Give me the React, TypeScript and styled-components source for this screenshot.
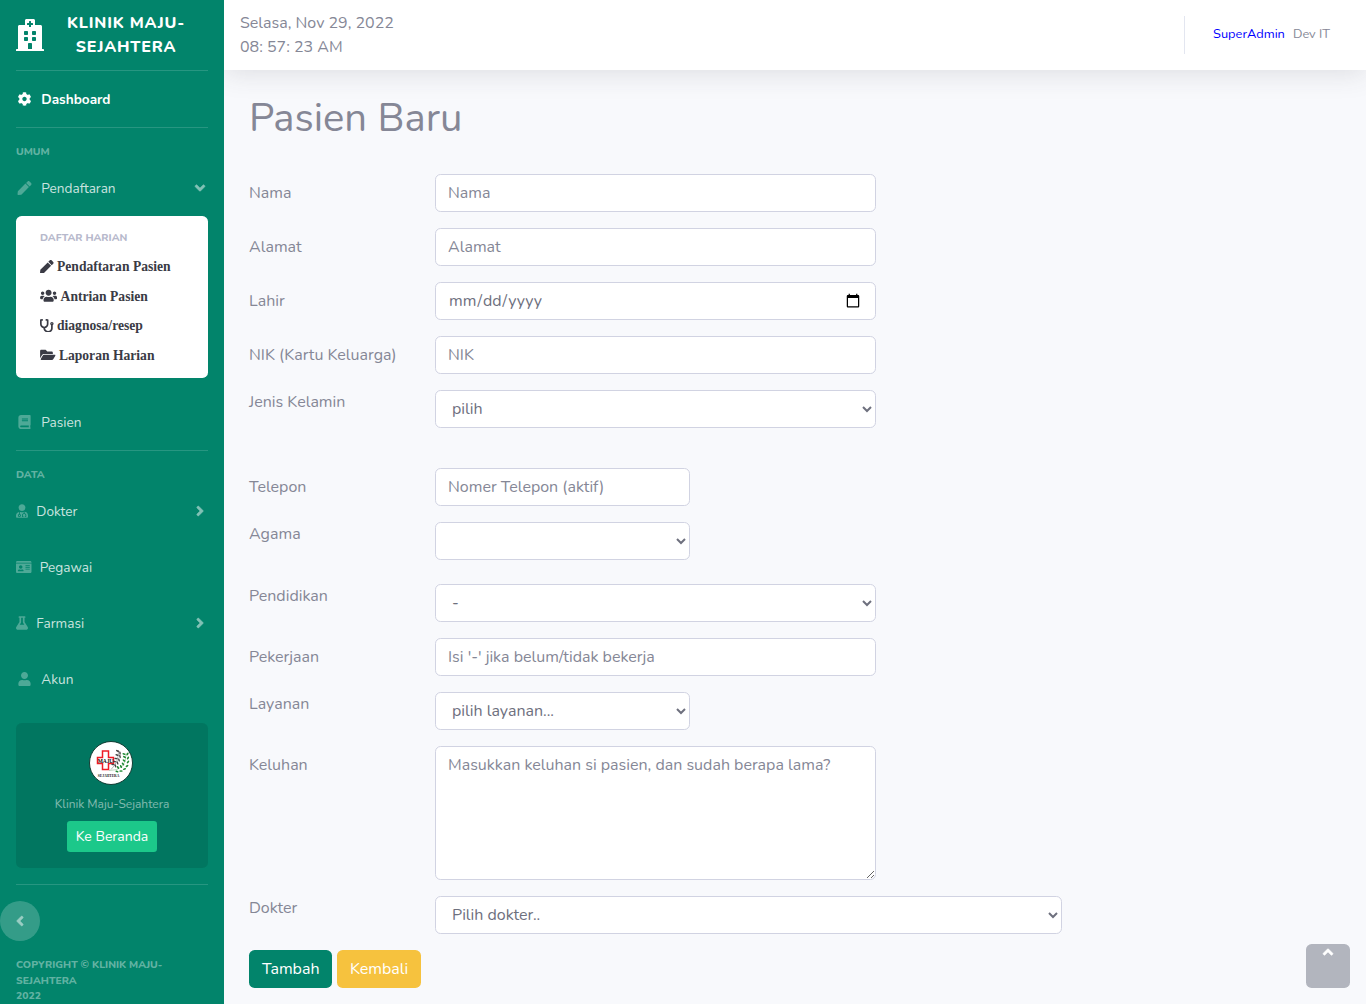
import React from "react";
import styled, { createGlobalStyle } from "styled-components";
import {
  FaAngleDown,
  FaAngleLeft,
  FaAngleRight,
  FaAngleUp,
  FaBook,
  FaCog,
  FaFlask,
  FaFolderOpen,
  FaHospital,
  FaIdCard,
  FaPen,
  FaStethoscope,
  FaUser,
  FaUserMd,
  FaUsers,
} from "react-icons/fa";

const green = "#02846b";
const fontStack = 'Nunito, Lato, "Open Sans", sans-serif';

const GlobalStyle = createGlobalStyle`
  *, *::before, *::after { box-sizing: border-box; }
  body {
    margin: 0;
    overflow: hidden;
    background: #f8f9fc;
    color: #858796;
    font: 400 16px/1.5 ${fontStack};
  }
  input, select, textarea, button { font-family: inherit; margin: 0; }
`;

const Page = styled.div`
  display: flex;
  height: 100vh;
  overflow: hidden;
`;

/* ---------- Sidebar ---------- */

const Sidebar = styled.aside`
  flex: 0 0 224px;
  display: flex;
  flex-direction: column;
  background: ${green};
  overflow: hidden;
  & > * { flex-shrink: 0; }
`;

const Brand = styled.div`
  display: flex;
  align-items: center;
  height: 70px;
  padding: 0 16px;
  color: #fff;
  font-size: 16px;
  font-weight: 800;
  letter-spacing: 0.8px;
  line-height: 24px;
  text-align: center;
  text-transform: uppercase;
  svg { font-size: 32px; width: 28px; }
`;

const BrandText = styled.div`
  flex: 1;
  padding: 0 16px;
  white-space: nowrap;
`;

const Divider = styled.hr`
  width: 192px;
  margin: 0 16px;
  border: 0;
  border-top: 1px solid rgba(255, 255, 255, 0.15);
`;

const GroupHeading = styled.div`
  height: 32px;
  padding: 16px 16px 0;
  color: rgba(255, 255, 255, 0.4);
  font-size: 10.4px;
  font-weight: 800;
  line-height: 15.6px;
  text-transform: uppercase;
`;

const NavLink = styled.a<{ $active?: boolean; $iconWidth?: number }>`
  display: flex;
  align-items: center;
  height: 56px;
  padding: 0 16px;
  color: ${(p) => (p.$active ? "#fff" : "rgba(255, 255, 255, 0.8)")};
  font-size: 13.6px;
  font-weight: ${(p) => (p.$active ? 700 : 400)};
  line-height: 20px;
  & > svg:first-child {
    width: ${(p) => p.$iconWidth ?? 17}px;
    height: 14px;
    margin-right: 8px;
    color: ${(p) => (p.$active ? "#fff" : "rgba(255, 255, 255, 0.3)")};
  }
`;

const NavText = styled.span`
  padding: 2px 0 0 0.3px;
`;

const Caret = styled.span`
  display: flex;
  margin-left: auto;
  color: #fff;
  opacity: 0.5;
  font-size: 16px;
  svg { stroke-width: 16px; }
`;

const SubMenu = styled.div`
  height: 162px;
  margin: 0 16px 16px;
  padding: 8px 0;
  border-radius: 5.6px;
  background: #fff;
`;

const SubHeading = styled.h6`
  margin: 0;
  padding: 6px 24px 6.45px;
  color: #b7b9cc;
  font-size: 10.4px;
  font-weight: 800;
  line-height: 16px;
  text-transform: uppercase;
`;

const SubLink = styled.a<{ $iconWidth?: number }>`
  display: flex;
  align-items: center;
  gap: 3.4px;
  height: 29.5px;
  padding: 0 24px;
  color: #3a3b45;
  font: 700 13.6px/20px "Liberation Serif", "Times New Roman", serif;
  white-space: nowrap;
  svg {
    width: ${(p) => p.$iconWidth ?? 13.6}px;
    height: 13.6px;
    margin-bottom: 1px;
  }
`;

const PromoCard = styled.div`
  display: flex;
  flex-direction: column;
  align-items: center;
  height: 145px;
  margin: 16px 16px;
  padding-top: 17.5px;
  border-radius: 5.6px;
  background: rgba(0, 0, 0, 0.1);
  svg { margin-right: 2px; }
`;

const PromoText = styled.p`
  margin: 10.5px 0 8px;
  color: rgba(255, 255, 255, 0.5);
  font-size: 12px;
  line-height: 18px;
`;

const PromoButton = styled.button`
  height: 31px;
  padding: 0 9px;
  border: 0;
  border-radius: 3.2px;
  background: #1cc88a;
  color: #fff;
  font-size: 14px;
`;

const Toggle = styled.button`
  display: flex;
  align-items: center;
  justify-content: center;
  width: 40px;
  height: 40px;
  margin-top: 16px;
  padding: 0;
  border: 0;
  border-radius: 50%;
  background: rgba(255, 255, 255, 0.2);
  color: #fff;
  font-size: 16px;
  svg { opacity: 0.5; stroke-width: 16px; }
`;

const Copyright = styled.div`
  padding: 16px 16px 0;
  color: rgba(255, 255, 255, 0.4);
  font-size: 10.4px;
  font-weight: 800;
  line-height: 15.6px;
  text-transform: uppercase;
`;

/* ---------- Main ---------- */

const Main = styled.main`
  flex: 1;
  display: flex;
  flex-direction: column;
  min-width: 0;
  overflow: hidden;
`;

const Topbar = styled.header`
  display: flex;
  flex: 0 0 70px;
  align-items: center;
  justify-content: space-between;
  padding: 0 36px 0 16px;
  background: #fff;
  box-shadow: 0 2.4px 28px 0 rgba(58, 59, 69, 0.15);
`;

const Clock = styled.div`
  line-height: 24px;
  white-space: pre;
`;

const UserArea = styled.div`
  display: flex;
  align-items: center;
  gap: 8px;
  height: 38px;
  padding: 0 0 2px 28px;
  border-left: 1px solid #e3e6f0;
  font-size: 12.8px;
  line-height: 19px;
`;

const RoleName = styled.span`
  color: blue;
`;

const Content = styled.form`
  padding: 24px 25px 0;
`;

const Title = styled.h1`
  margin: 0 0 32px;
  font-size: 40px;
  font-weight: 400;
  line-height: 48px;
`;

const Field = styled.div<{ $gap?: number; $select?: boolean }>`
  display: grid;
  grid-template-columns: 186px auto;
  justify-content: start;
  align-items: start;
  margin-bottom: ${(p) => p.$gap ?? 16}px;
  & > label { padding-top: ${(p) => (p.$select ? 0 : 7)}px; line-height: 24px; }
`;

const controlBase = `
  display: block;
  height: 38px;
  padding: 6px 12px;
  border: 1px solid #d1d3e2;
  border-radius: 5.6px;
  background-color: #fff;
  color: #6e707e;
  font-size: 16px;
  font-weight: 400;
  line-height: 24px;
  &::placeholder { color: #858796; opacity: 1; }
`;

const Input = styled.input<{ $w?: number }>`
  ${controlBase}
  width: ${(p) => p.$w ?? 441}px;
`;

const Select = styled.select<{ $w?: number }>`
  ${controlBase}
  width: ${(p) => p.$w ?? 441}px;
`;

const TextArea = styled.textarea`
  ${controlBase}
  width: 441px;
  height: 134px;
  resize: vertical;
`;

const Actions = styled.div`
  display: flex;
  gap: 4.5px;
`;

const Button = styled.button<{ $color: string }>`
  height: 38px;
  padding: 0 13px;
  border: 0;
  border-radius: 5.6px;
  background: ${(p) => p.$color};
  color: #fff;
  font-size: 16px;
  line-height: 24px;
`;

const ScrollTop = styled.a`
  position: fixed;
  right: 16px;
  bottom: 16px;
  display: flex;
  justify-content: center;
  width: 44px;
  height: 44px;
  border-radius: 5.6px;
  background: #b2b5be;
  color: #fff;
  font-size: 16px;
  svg { stroke-width: 16px; }
`;

const darkLeaves = [
  [53, 50, 70], [48, 47, 10], [57, 44, 70], [51, 41, 10], [60, 38, 70],
  [54, 35, 10], [62, 31, 75], [56, 28, 15], [62, 24, 80], [57, 20, 30],
];
const greenLeaves = [
  [56, 61, 20], [58, 53, 60], [64, 60, 0], [64, 51, 60], [71, 56, -20], [68, 46, 50],
  [76, 50, -40], [70, 39, 40], [78, 42, -50], [71, 32, 30], [78, 34, -60], [70, 26, 20], [77, 26, -60],
];

function ClinicLogo() {
  return (
    <svg width="44" height="44" viewBox="0 0 88 88" aria-hidden="true">
      <circle cx="44" cy="44" r="43" fill="#fff" stroke="#123c33" strokeWidth="2" />
      <path
        d="M27 20h12v13h10v12H39v12H27V45H17V33h10z"
        fill="#fff"
        stroke="#ee1c25"
        strokeWidth="3"
      />
      <text x="33" y="43" textAnchor="middle" fontFamily="Liberation Serif, serif" fontWeight="700" fontSize="11" textLength="31" fill="#111">
        MAJU
      </text>
      <path d="M44 57 Q60 42 59 18" fill="none" stroke="#666" strokeWidth="1" />
      {darkLeaves.map(([x, y, r], i) => (
        <ellipse key={i} cx={x} cy={y} rx="3.4" ry="1.5" fill="#444" transform={`rotate(${r} ${x} ${y})`} />
      ))}
      <path d="M40 59 Q76 60 74 24" fill="none" stroke="#7cae7c" strokeWidth="1" />
      {greenLeaves.map(([x, y, r], i) => (
        <ellipse key={i} cx={x} cy={y} rx="3.4" ry="1.7" fill="#1f8a33" transform={`rotate(${r} ${x} ${y})`} />
      ))}
      <text x="39" y="72" textAnchor="middle" fontFamily="Liberation Serif, serif" fontWeight="700" fontSize="9.5" textLength="43" lengthAdjust="spacingAndGlyphs" fill="#222">
        SEJAHTERA
      </text>
    </svg>
  );
}

export default function App() {
  return (
    <Page>
      <GlobalStyle />
      <Sidebar>
        <Brand>
          <FaHospital />
          <BrandText>
            Klinik Maju-
            <br />
            Sejahtera
          </BrandText>
        </Brand>
        <Divider />
        <NavLink $active>
          <FaCog />
          <NavText>Dashboard</NavText>
        </NavLink>
        <Divider />
        <GroupHeading>Umum</GroupHeading>
        <NavLink>
          <FaPen />
          <NavText>Pendaftaran</NavText>
          <Caret>
            <FaAngleDown />
          </Caret>
        </NavLink>
        <SubMenu>
          <SubHeading>Daftar Harian</SubHeading>
          <SubLink>
            <FaPen />
            Pendaftaran Pasien
          </SubLink>
          <SubLink $iconWidth={17.2}>
            <FaUsers />
            Antrian Pasien
          </SubLink>
          <SubLink>
            <FaStethoscope />
            diagnosa/resep
          </SubLink>
          <SubLink $iconWidth={15.5}>
            <FaFolderOpen />
            Laporan Harian
          </SubLink>
        </SubMenu>
        <NavLink>
          <FaBook />
          <NavText>Pasien</NavText>
        </NavLink>
        <Divider />
        <GroupHeading>Data</GroupHeading>
        <NavLink $iconWidth={12}>
          <FaUserMd />
          <NavText>Dokter</NavText>
          <Caret>
            <FaAngleRight />
          </Caret>
        </NavLink>
        <NavLink $iconWidth={15.5}>
          <FaIdCard />
          <NavText>Pegawai</NavText>
        </NavLink>
        <NavLink $iconWidth={12}>
          <FaFlask />
          <NavText>Farmasi</NavText>
          <Caret>
            <FaAngleRight />
          </Caret>
        </NavLink>
        <NavLink>
          <FaUser />
          <NavText>Akun</NavText>
        </NavLink>
        <PromoCard>
          <ClinicLogo />
          <PromoText>Klinik Maju-Sejahtera</PromoText>
          <PromoButton type="button">Ke Beranda</PromoButton>
        </PromoCard>
        <Divider />
        <Toggle type="button" aria-label="Toggle sidebar">
          <FaAngleLeft />
        </Toggle>
        <Copyright>
          Copyright © Klinik Maju-Sejahtera
          <br />
          2022
        </Copyright>
      </Sidebar>

      <Main>
        <Topbar>
          <Clock>{"Selasa, Nov 29, 2022\n08: 57: 23 AM"}</Clock>
          <UserArea>
            <RoleName>SuperAdmin</RoleName>
            <span>Dev IT</span>
          </UserArea>
        </Topbar>
        <Content>
          <Title>Pasien Baru</Title>
          <Field>
            <label>Nama</label>
            <Input placeholder="Nama" />
          </Field>
          <Field>
            <label>Alamat</label>
            <Input placeholder="Alamat" />
          </Field>
          <Field>
            <label>Lahir</label>
            <Input type="date" />
          </Field>
          <Field>
            <label>NIK (Kartu Keluarga)</label>
            <Input placeholder="NIK" />
          </Field>
          <Field $select $gap={40}>
            <label>Jenis Kelamin</label>
            <Select>
              <option>pilih</option>
            </Select>
          </Field>
          <Field>
            <label>Telepon</label>
            <Input $w={255} placeholder="Nomer Telepon (aktif)" />
          </Field>
          <Field $select $gap={24}>
            <label>Agama</label>
            <Select $w={255}>
              <option></option>
            </Select>
          </Field>
          <Field $select>
            <label>Pendidikan</label>
            <Select>
              <option>-</option>
            </Select>
          </Field>
          <Field>
            <label>Pekerjaan</label>
            <Input placeholder="Isi '-' jika belum/tidak bekerja" />
          </Field>
          <Field $select>
            <label>Layanan</label>
            <Select $w={255}>
              <option>pilih layanan...</option>
            </Select>
          </Field>
          <Field>
            <label>Keluhan</label>
            <TextArea placeholder="Masukkan keluhan si pasien, dan sudah berapa lama?" />
          </Field>
          <Field $select>
            <label>Dokter</label>
            <Select $w={627}>
              <option>Pilih dokter..</option>
            </Select>
          </Field>
          <Actions>
            <Button type="button" $color={green}>
              Tambah
            </Button>
            <Button type="button" $color="#f6c23e">
              Kembali
            </Button>
          </Actions>
        </Content>
      </Main>
      <ScrollTop aria-label="Scroll to top">
        <FaAngleUp />
      </ScrollTop>
    </Page>
  );
}
